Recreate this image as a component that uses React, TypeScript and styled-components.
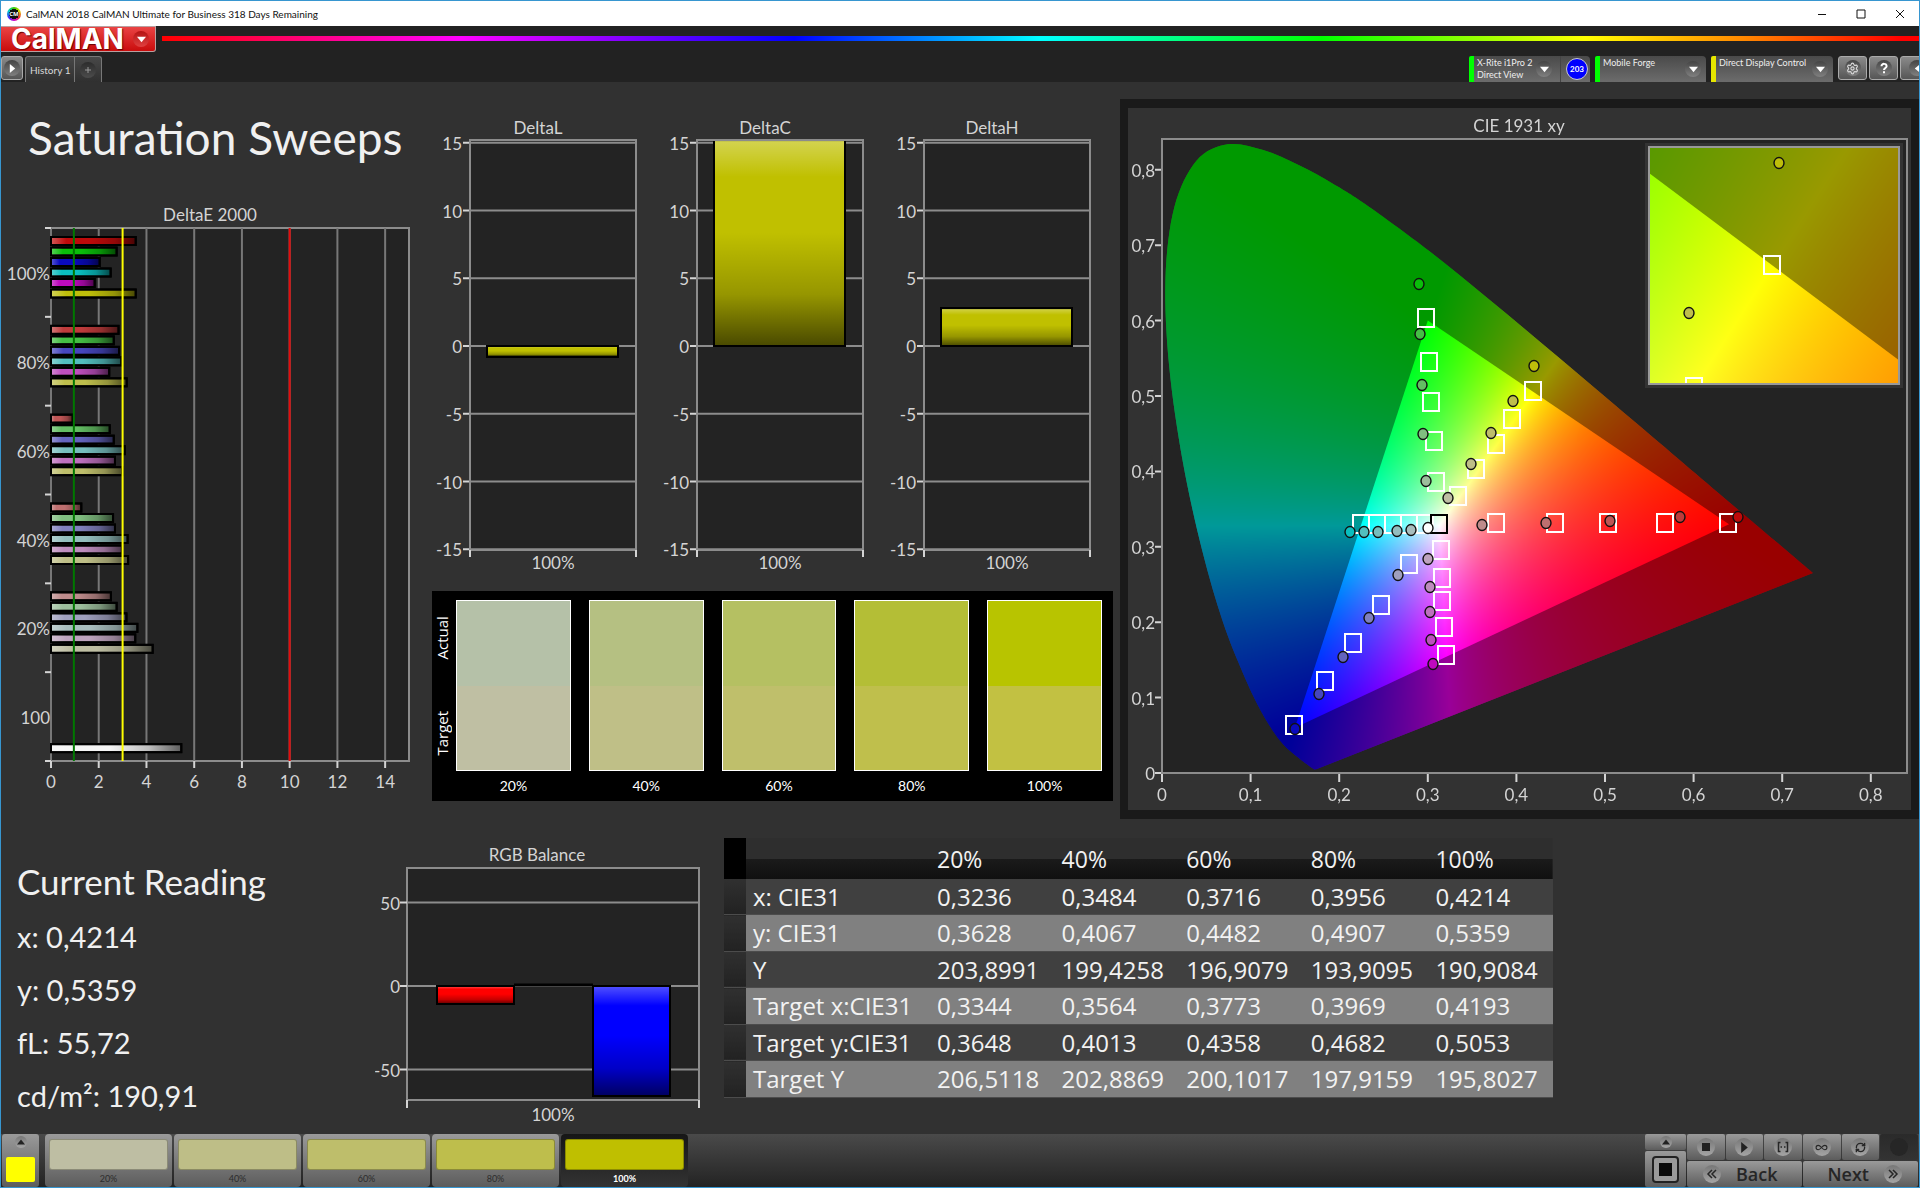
import React, { useLayoutEffect, useRef } from "react";
import styled, { createGlobalStyle, css } from "styled-components";
import { Infinity as InfinityIcon, RefreshCw, Settings } from "lucide-react";

const chartFont = `Lato, "Open Sans", sans-serif`;
const uiFont = `"Open Sans", "Noto Sans", sans-serif`;

const Global = createGlobalStyle`
  *, *::before, *::after { box-sizing: border-box; }
  body { margin: 0; background: #313131; font-family: ${chartFont}; }
  button, select { font: inherit; color: inherit; border: 0; padding: 0; margin: 0; cursor: pointer; }
`;

/* ---------- window frame ---------- */

const Window = styled.div`
  display: flex;
  flex-direction: column;
  min-height: 100vh;
  border: 1px solid #3796d0;
  background: #313131;
  color: #e6e6e6;
  overflow: hidden;
`;

const TitleBar = styled.header`
  display: flex;
  align-items: center;
  height: 25px;
  padding-left: 6px;
  background: #fff;
  color: #111;
  font-size: 10px;
`;

const AppIcon = styled.span`
  display: grid;
  place-items: center;
  width: 14px;
  height: 14px;
  margin-right: 5px;
  border-radius: 50%;
  background: radial-gradient(circle, #111 0 5px, transparent 5px),
    conic-gradient(#3c0, #dd0, #e33, #c0c, #33f, #0cc, #3c0);
  color: #fff;
  font: 700 6px/6px ${uiFont};
`;

const WindowTitle = styled.span`
  flex: 1;
`;

const CaptionButton = styled.button`
  display: grid;
  place-items: center;
  width: 39px;
  height: 24px;
  background: none;
`;

const BrandRow = styled.div`
  display: flex;
  align-items: flex-start;
  gap: 6px;
  height: 30px;
  background: #222;
`;

const Logo = styled.button`
  display: flex;
  align-items: center;
  justify-content: space-between;
  width: 155px;
  height: 26px;
  padding: 0 6px 0 10px;
  border-radius: 0 0 3px 0;
  border: solid #b9a0a0;
  border-width: 1px 1px 1px 0;
  background: linear-gradient(#ea4444, #c90c0c);
  color: #fff;
  font: 700 28px/22px Inter, sans-serif;
  text-shadow: 1px 1px 1px #600;
`;

const Rainbow = styled.div`
  flex: 1;
  height: 5px;
  margin-top: 10px;
  background: linear-gradient(90deg, #f00, #f0f 17%, #00f 36%, #0ff 50%, #0f0 66%, #ff0 81%, #f80 90%, #f00 99%);
`;

const ToolRow = styled.div`
  display: flex;
  align-items: flex-start;
  height: 26px;
  background: #222;
  font-size: 10px;
`;

const Knob = styled.span<{ $dark?: boolean; $red?: boolean }>`
  display: grid;
  place-items: center;
  flex: none;
  width: 16px;
  height: 16px;
  border-radius: 50%;
  background: ${(p) =>
    p.$red
      ? "linear-gradient(#b41414, #e04040)"
      : p.$dark
        ? "linear-gradient(#2c2c2c, #4c4c4c)"
        : "linear-gradient(#444, #808080)"};
`;

const MetalButton = styled.button<{ $width: number }>`
  display: grid;
  place-items: center;
  flex: none;
  width: ${(p) => p.$width}px;
  height: 24px;
  border: 1px solid #aaa;
  border-radius: 3px;
  background: linear-gradient(#8a8a8a, #565656);
  color: #fff;
`;

const Tab = styled.button<{ $faint?: boolean }>`
  display: grid;
  place-items: center;
  height: 26px;
  padding: 0 5px;
  border: solid #777;
  border-width: 1px 1px 0 0;
  border-radius: 0 3px 0 0;
  background: linear-gradient(#484848, #303030);
  color: ${(p) => (p.$faint ? "#999" : "#d8d8d8")};
`;

const TabStrip = styled.nav`
  display: flex;
  flex: 1;
  margin-left: 2px;
  > :first-child {
    border-left-width: 1px;
    border-radius: 3px 0 0 0;
    padding: 0 4px;
  }
`;

const Devices = styled.div`
  display: flex;
  gap: 2px;
  margin-right: -15px;
`;

const deviceBox = css<{ $accent: string; $width: number }>`
  width: ${(p) => p.$width}px;
  height: 26px;
  margin-right: 3px;
  border-left: 5px solid ${(p) => p.$accent};
  border-radius: 2px 4px 0 0;
  background: linear-gradient(#4a4a4a, #6c6c6c);
  color: #eee;
  font-size: 9px;
  line-height: 12px;
`;

const Meter = styled.div<{ $accent: string; $width: number }>`
  ${deviceBox}
  display: flex;
`;

const MeterButton = styled.button`
  display: flex;
  align-items: center;
  justify-content: space-between;
  flex: 1;
  padding: 0 8px 0 3px;
  border-right: 1px solid #444;
  background: none;
  text-align: left;
`;

const Badge = styled.span`
  display: grid;
  place-items: center;
  width: 22px;
  height: 22px;
  margin: 2px 2px 0 5px;
  border: 1px solid #ccc;
  border-radius: 50%;
  background: #00f;
  color: #fff;
  font-size: 8px;
  font-weight: 700;
`;

const DeviceSelect = styled.label<{ $accent: string; $width: number }>`
  ${deviceBox}
  display: flex;
  align-items: center;
  padding-right: 5px;
  > select {
    flex: 1;
    min-width: 0;
    height: 26px;
    padding: 0 0 12px 3px;
    appearance: none;
    background: none;
    outline: 0;
  }
`;

/* ---------- page body ---------- */

const Main = styled.main`
  flex: 1;
`;

const TopGrid = styled.div`
  display: grid;
  grid-template-columns: 424fr 695fr 799fr;
  align-items: start;
`;

const PageTitle = styled.h1`
  margin: 0;
  padding: 26px 0 32px 27px;
  color: #f0f0f0;
  font-size: 46px;
  font-weight: 400;
  line-height: 60px;
  white-space: nowrap;
`;

const Chart = styled.svg`
  display: block;
  width: 100%;
  height: auto;
  font-family: ${chartFont};
  font-size: 17px;
  fill: #d4d4d4;
`;

const MiddleColumn = styled.div`
  padding-top: 33px;
`;

const DeltaRow = styled.div`
  display: grid;
  grid-template-columns: repeat(3, 1fr);
  padding-right: 14px;
`;

const SwatchPanel = styled.section`
  display: grid;
  grid-template-columns: 24px 1fr;
  margin: 16px 7px 0;
  padding: 9px 11px 5px 0;
  background: #000;
  color: #fff;
`;

const SwatchSides = styled.div`
  display: grid;
  grid-template-rows: 1fr 1fr;
  gap: 18px;
  height: 171px;
  font: 15px/20px ${uiFont};
`;

const SideLabel = styled.span`
  display: grid;
  place-items: center;
  writing-mode: vertical-rl;
  transform: rotate(180deg);
  padding-left: 4px;
`;

const SwatchList = styled.div`
  display: grid;
  grid-template-columns: repeat(5, 1fr);
  gap: 18px;
`;

const Swatch = styled.figure`
  margin: 0;
  text-align: center;
`;

const SwatchPair = styled.div<{ $actual: string; $target: string }>`
  height: 171px;
  border: 1px solid #fff;
  background: linear-gradient(${(p) => p.$actual} 50%, ${(p) => p.$target} 50%);
`;

const SwatchCaption = styled.figcaption`
  padding-top: 4px;
  font-size: 14px;
  line-height: 21px;
`;

const CiePanel = styled.section`
  display: grid;
  margin-top: 17px;
  border: solid #1a1a1a;
  border-width: 9px 8px;
  background: #323232;
  > * {
    grid-area: 1 / 1;
  }
`;

const GamutCanvas = styled.canvas`
  display: block;
  width: 100%;
  height: auto;
`;

const BottomGrid = styled.div`
  display: grid;
  grid-template-columns: 374fr 349fr 829fr 366fr;
  align-items: start;
  padding-top: 19px;
`;

const Readings = styled.section`
  padding: 17px 0 0 16px;
  color: #f0f0f0;
  white-space: nowrap;
`;

const ReadingTitle = styled.h2`
  margin: 0 0 3px;
  font-size: 35px;
  font-weight: 400;
  line-height: 52px;
`;

const ReadingLine = styled.p`
  margin: 0;
  font-size: 29px;
  line-height: 53px;
`;

const ChartCell = styled.div`
  padding-top: 5px;
`;

const DataTable = styled.table`
  width: 100%;
  height: 260px;
  border-collapse: collapse;
  table-layout: fixed;
  color: #f2f2f2;
  font: 24px/30px ${uiFont};
`;

const Gutter = styled.td`
  width: 22px;
  padding: 0;
  background: linear-gradient(#303030, #222);
`;

const HeadRow = styled.tr`
  height: 41px;
  background: linear-gradient(#2e2e2e 50%, #1b1b1b 50%, #101010);
  > ${Gutter} {
    background: #000;
  }
`;

const BodyRow = styled.tr`
  background: #404040;
  border-bottom: 1px solid #4c4c4c;
  &:nth-child(even) {
    background: #808080;
  }
`;

const HeadCell = styled.th<{ $name?: boolean }>`
  width: ${(p) => (p.$name ? "184px" : "auto")};
  padding: 0 0 0 7px;
  font-size: 23px;
  font-weight: 400;
  text-align: left;
`;

const RowName = styled.th`
  padding: 0 0 0 7px;
  font-weight: 400;
  text-align: left;
  white-space: nowrap;
`;

const Cell = styled.td`
  padding: 0 0 0 7px;
`;

/* ---------- bottom bar ---------- */

const BottomBar = styled.footer`
  display: flex;
  height: 53px;
  padding: 0 1px;
  background: linear-gradient(#4a4a4a, #232323);
`;

const metal = "linear-gradient(#9a9a9a, #5c5c5c)";

const PickerButton = styled.button`
  display: flex;
  flex-direction: column;
  align-items: center;
  justify-content: space-between;
  width: 37px;
  padding: 2px 0 5px;
  border-radius: 3px;
  background: ${metal};
`;

const PickerColor = styled.span`
  width: 29px;
  height: 25px;
  border-radius: 2px;
  background: #ff0;
`;

const PatternList = styled.div`
  display: flex;
  flex: 1;
  gap: 2px;
  margin-left: 6px;
`;

const PatternButton = styled.button<{ $active?: boolean }>`
  display: flex;
  flex-direction: column;
  justify-content: space-between;
  width: 127px;
  padding: 5px 4px 1px;
  border-radius: 4px;
  background: ${(p) => (p.$active ? "linear-gradient(#161616, #333)" : metal)};
  color: ${(p) => (p.$active ? "#fff" : "#2c2c2c")};
  font-size: 9px;
  font-weight: ${(p) => (p.$active ? 700 : 400)};
  line-height: 14px;
  text-align: center;
`;

const PatternColor = styled.span<{ $color: string }>`
  display: block;
  width: 100%;
  height: 31px;
  border: 1px solid #0004;
  border-radius: 3px;
  background: ${(p) => p.$color};
`;

const PatternName = styled.span`
  width: 100%;
`;

const Transport = styled.div`
  display: flex;
  gap: 1px;
`;

const DisplayStack = styled.div`
  display: grid;
  grid-template-rows: 16px 1fr;
  gap: 1px;
  width: 41px;
`;

const ControlGrid = styled.div`
  display: grid;
  grid-template-columns: repeat(6, 1fr);
  grid-template-rows: 26px 1fr;
  gap: 1px;
  width: 231px;
`;

const ControlButton = styled.button<{ $wide?: boolean; $off?: boolean }>`
  display: flex;
  align-items: center;
  justify-content: center;
  gap: 15px;
  grid-column: span ${(p) => (p.$wide ? 3 : 1)};
  border-radius: 2px;
  background: ${(p) => (p.$off ? "linear-gradient(#2a2a2a, #333)" : metal)};
  color: #262626;
  font: 600 18px/22px ${uiFont};
`;

const BackButton = styled(ControlButton)`
  justify-content: flex-start;
  padding-left: 16px;
`;

const NextButton = styled(ControlButton)`
  justify-content: flex-end;
  padding-right: 16px;
`;

const ControlKnob = styled.span<{ $off?: boolean; $small?: boolean }>`
  display: grid;
  place-items: center;
  width: ${(p) => (p.$small ? 12 : 18)}px;
  height: ${(p) => (p.$small ? 12 : 18)}px;
  border-radius: 50%;
  background: ${(p) => (p.$off ? "#262626" : "linear-gradient(#777, #a5a5a5)")};
`;

/* ---------- icons ---------- */

const Caret = ({ dir = "down", color = "#fff", size = 9 }: { dir?: "down" | "up" | "left" | "right"; color?: string; size?: number }) => {
  const points = { down: "0,2 10,2 5,8", up: "0,8 10,8 5,2", left: "8,0 8,10 2,5", right: "2,0 2,10 8,5" }[dir];
  return (
    <svg width={size} height={size} viewBox="0 0 10 10" aria-hidden="true">
      <polygon points={points} fill={color} />
    </svg>
  );
};

const Line = ({ d, size = 12, width = 1 }: { d: string; size?: number; width?: number }) => (
  <svg width={size} height={size} viewBox="0 0 12 12" fill="none" stroke="currentColor" strokeWidth={width} aria-hidden="true">
    <path d={d} />
  </svg>
);

/* ---------- data ---------- */

const hues: Record<string, string[]> = {
  "100%": ["#be0a0a", "#0abe0a", "#0a0abe", "#0abebe", "#be0abe", "#bebe0a"],
  "80%": ["#be3b3b", "#45be45", "#4646be", "#52bebe", "#be4fbe", "#bebe4c"],
  "60%": ["#be5555", "#63be63", "#6464be", "#76bebe", "#be70be", "#bebe6b"],
  "40%": ["#be6f6f", "#80be80", "#8080be", "#93bebe", "#be8cbe", "#bebe87"],
  "20%": ["#be8b8b", "#9cbe9c", "#9f9fbe", "#a8bebe", "#bea3be", "#bebea3"],
};
const levels = ["20%", "40%", "60%", "80%", "100%"];

const deltaE: { name: string; values: number[] }[] = [
  { name: "100%", values: [3.55, 2.75, 2.04, 2.5, 1.83, 3.55] },
  { name: "80%", values: [2.83, 2.63, 2.85, 2.95, 2.44, 3.17] },
  { name: "60%", values: [0.91, 2.46, 2.63, 3.09, 2.68, 2.99] },
  { name: "40%", values: [1.27, 2.6, 2.68, 3.21, 2.97, 3.23] },
  { name: "20%", values: [2.51, 2.75, 3.16, 3.62, 3.53, 4.26] },
];

const swatches = [
  ["#b5c1a8", "#bfbfa3"],
  ["#b5c082", "#bfbf87"],
  ["#b5c062", "#bfbf6b"],
  ["#b4be36", "#bfbf4c"],
  ["#b8c400", "#c2c142"],
];

const tableRows: [string, string[]][] = [
  ["x: CIE31", ["0,3236", "0,3484", "0,3716", "0,3956", "0,4214"]],
  ["y: CIE31", ["0,3628", "0,4067", "0,4482", "0,4907", "0,5359"]],
  ["Y", ["203,8991", "199,4258", "196,9079", "193,9095", "190,9084"]],
  ["Target x:CIE31", ["0,3344", "0,3564", "0,3773", "0,3969", "0,4193"]],
  ["Target y:CIE31", ["0,3648", "0,4013", "0,4358", "0,4682", "0,5053"]],
  ["Target Y", ["206,5118", "202,8869", "200,1017", "197,9159", "195,8027"]],
];

/* ---------- charts ---------- */

const grid = "#8c8c8c";
const tick = "#d4d4d4";

const Shade = ({ id, across }: { id: string; across?: boolean }) => (
  <linearGradient id={id} x1="0" y1="0" x2={across ? "1" : "0"} y2={across ? "0" : "1"}>
    <stop offset="0" stopColor="#fff" stopOpacity="0.32" />
    <stop offset="0.18" stopColor="#fff" stopOpacity="0" />
    <stop offset="0.45" stopColor="#000" stopOpacity="0" />
    <stop offset="0.75" stopColor="#000" stopOpacity="0.22" />
    <stop offset="1" stopColor="#000" stopOpacity="0.62" />
  </linearGradient>
);

const Bar = ({ x, y, w, h, color, shade }: { x: number; y: number; w: number; h: number; color: string; shade: string }) => (
  <g stroke="#000" strokeWidth="2">
    <rect x={x} y={y} width={w} height={h} fill={color} />
    <rect x={x} y={y} width={w} height={h} fill={`url(#${shade})`} />
  </g>
);

function DeltaEChart() {
  const left = 50, top = 28, width = 358, height = 533;
  const unit = width / 15;
  const band = height / 6;
  const bottom = top + height;
  const marks = [0, 2, 4, 6, 8, 10, 12, 14];
  const bar = (value: number, group: number, index: number, color: string) => (
    <Bar key={`${group}-${index}`} x={left} y={top + band * group + 9 + index * 10.5} w={value * unit} h={8} color={color} shade="shade-e" />
  );
  return (
    <Chart viewBox="0 0 424 600" role="img" aria-label="DeltaE 2000">
      <defs><Shade id="shade-e" across /></defs>
      <text x="209" y="21" textAnchor="middle">DeltaE 2000</text>
      <rect x={left} y={top} width={width} height={height} fill="#232323" stroke={grid} strokeWidth="2" />
      {marks.map((m) => (
        <g key={m}>
          <line x1={left + m * unit} x2={left + m * unit} y1={top} y2={bottom} stroke="#777" strokeWidth="2" />
          <line x1={left + m * unit} x2={left + m * unit} y1={bottom} y2={bottom + 7} stroke={tick} strokeWidth="2" />
          <text x={left + m * unit} y={bottom + 27} textAnchor="middle">{m}</text>
        </g>
      ))}
      {[0, 1, 2, 3, 4, 5, 6].map((g) => (
        <line key={g} x1={left - 6} x2={left} y1={top + g * band} y2={top + g * band} stroke={tick} strokeWidth="2" />
      ))}
      {["100%", "80%", "60%", "40%", "20%", "100"].map((name, g) => (
        <text key={g} x={left - 1} y={top + band * g + 52} textAnchor="end">{name}</text>
      ))}
      {deltaE.map((row, g) => row.values.map((v, i) => bar(v, g, i, hues[row.name][i])))}
      {bar(5.46, 5, 6, "#f4f4f4")}
      <line x1={left + unit - 1} x2={left + unit - 1} y1={top} y2={bottom} stroke="#007800" strokeWidth="2" />
      <line x1={left + 3 * unit} x2={left + 3 * unit} y1={top} y2={bottom} stroke="#ff0" strokeWidth="2" />
      <line x1={left + 10 * unit} x2={left + 10 * unit} y1={top} y2={bottom} stroke="#e60a0a" strokeWidth="2" />
    </Chart>
  );
}

function DeltaChart({ name, value }: { name: string; value: number }) {
  const left = 45, right = 211, top = 25, zero = 231, bottom = 435, unit = 13.55;
  const shown = Math.min(value, 15.2);
  const id = `shade-${name}`;
  return (
    <Chart viewBox="0 0 227 460" role="img" aria-label={name}>
      <defs><Shade id={id} /></defs>
      <text x="113" y="19" textAnchor="middle">{name}</text>
      <rect x={left} y={top} width={right - left} height={bottom - top} fill="#232323" />
      {[15, 10, 5, 0, -5, -10, -15].map((m) => (
        <g key={m}>
          <line x1={left} x2={right} y1={zero - m * unit} y2={zero - m * unit} stroke={grid} strokeWidth="2" />
          <line x1={left - 7} x2={left} y1={zero - m * unit} y2={zero - m * unit} stroke={tick} strokeWidth="2" />
          <text x={left - 8} y={zero - m * unit + 7} textAnchor="end">{m}</text>
        </g>
      ))}
      <Bar x={left + 17} y={zero - Math.max(shown, 0) * unit} w={131} h={Math.abs(shown) * unit} color="#c0c000" shade={id} />
      <rect x={left} y={top} width={right - left} height={bottom - top} fill="none" stroke={grid} strokeWidth="2" />
      <path d={`M${left} ${bottom}v7M${right} ${bottom}v7`} stroke={tick} strokeWidth="2" />
      <text x="128" y="454" textAnchor="middle">100%</text>
    </Chart>
  );
}

function RgbBalanceChart() {
  const left = 32, right = 324, top = 25, zero = 143, bottom = 257, unit = 1.67;
  return (
    <Chart viewBox="0 0 349 286" role="img" aria-label="RGB Balance">
      <defs><Shade id="shade-rgb" /></defs>
      <text x="162" y="18" textAnchor="middle">RGB Balance</text>
      <rect x={left} y={top} width={right - left} height={bottom - top} fill="#232323" stroke={grid} strokeWidth="2" />
      {[50, 0, -50].map((m) => (
        <g key={m}>
          <line x1={left} x2={right} y1={zero - m * unit} y2={zero - m * unit} stroke={grid} strokeWidth="2" />
          <line x1={left - 7} x2={left} y1={zero - m * unit} y2={zero - m * unit} stroke={tick} strokeWidth="2" />
          <text x={left - 7} y={zero - m * unit + 7} textAnchor="end">{m}</text>
        </g>
      ))}
      <Bar x={62} y={zero} w={77} h={18} color="#f00" shade="shade-rgb" />
      <line x1="139" x2="218" y1={zero - 1} y2={zero - 1} stroke="#000" strokeWidth="3" />
      <Bar x={218} y={zero} w={77} h={110} color="#00f" shade="shade-rgb" />
      <path d={`M${left} ${bottom}v8M${right} ${bottom}v8`} stroke={tick} strokeWidth="2" />
      <text x="178" y="278" textAnchor="middle">100%</text>
    </Chart>
  );
}

/* CIE 1931 spectral locus, 380 to 700 nm */
const locus: [number, number][] = [
  [0.1741, 0.005], [0.1726, 0.0048], [0.1714, 0.0051], [0.1689, 0.0069], [0.1644, 0.0109], [0.1566, 0.0177],
  [0.144, 0.0297], [0.1355, 0.0399], [0.1241, 0.0578], [0.1096, 0.0868], [0.0913, 0.1327], [0.0687, 0.2007],
  [0.0454, 0.295], [0.0235, 0.4127], [0.0082, 0.5384], [0.0039, 0.6548], [0.0139, 0.7502], [0.0389, 0.812],
  [0.0743, 0.8338], [0.1142, 0.8262], [0.1547, 0.8059], [0.1929, 0.7816], [0.2296, 0.7543], [0.3016, 0.6923],
  [0.3731, 0.6245], [0.4441, 0.5547], [0.5125, 0.4866], [0.5752, 0.4242], [0.627, 0.3725], [0.6658, 0.334],
  [0.6915, 0.3083], [0.719, 0.2809], [0.7347, 0.2653],
];
const rec709: [number, number][] = [[0.64, 0.33], [0.3, 0.6], [0.15, 0.06]];

const cie = { width: 783, height: 702, left: 34, right: 779, top: 31, bottom: 665, sx: 886, sy: 754 };
const inset = { left: 521, top: 39, width: 250, height: 237, cx: 644, cy: 157, x: 0.4193, y: 0.5053, sx: 3500, sy: 3300 };

type Project = (x: number, y: number) => [number, number];
const toPlot: Project = (x, y) => [cie.left + x * cie.sx, cie.bottom - y * cie.sy];
const toInset: Project = (x, y) => [inset.cx + (x - inset.x) * inset.sx, inset.cy - (y - inset.y) * inset.sy];

function chromaColor(x: number, y: number): [number, number, number] {
  const X = x / y;
  const Z = (1 - x - y) / y;
  const r = Math.max(0, 3.2406 * X - 1.5372 - 0.4986 * Z);
  const g = Math.max(0, -0.9689 * X + 1.8758 + 0.0415 * Z);
  const b = Math.max(0, 0.0557 * X - 0.204 + 1.057 * Z);
  const top = Math.max(r, g, b, 1e-6);
  return [(255 * r) / top, (255 * g) / top, (255 * b) / top];
}

function colorField(w: number, h: number, locate: (px: number, py: number) => [number, number]) {
  const field = document.createElement("canvas");
  field.width = w;
  field.height = h;
  const ctx = field.getContext("2d")!;
  const image = ctx.createImageData(w, h);
  for (let py = 0; py < h; py++) {
    for (let px = 0; px < w; px++) {
      const [x, y] = locate(px, py);
      const [r, g, b] = chromaColor(x, Math.max(y, 0.001));
      image.data.set([r, g, b, 255], (py * w + px) * 4);
    }
  }
  ctx.putImageData(image, 0, 0);
  return field;
}

function locusPath(project: Project) {
  const pts = locus.map(([x, y]) => project(x, y));
  const path = new Path2D();
  path.moveTo(...pts[0]);
  for (let i = 0; i < pts.length - 1; i++) {
    const a = pts[Math.max(i - 1, 0)], b = pts[i], c = pts[i + 1], d = pts[Math.min(i + 2, pts.length - 1)];
    path.bezierCurveTo(b[0] + (c[0] - a[0]) / 6, b[1] + (c[1] - a[1]) / 6, c[0] - (d[0] - b[0]) / 6, c[1] - (d[1] - b[1]) / 6, c[0], c[1]);
  }
  path.closePath();
  return path;
}

function trianglePath(project: Project) {
  const path = new Path2D();
  rec709.forEach(([x, y]) => path.lineTo(...project(x, y)));
  path.closePath();
  return path;
}

function paintGamut(ctx: CanvasRenderingContext2D, field: HTMLCanvasElement, x: number, y: number, project: Project) {
  const outer = locusPath(project);
  ctx.save();
  ctx.clip(outer);
  ctx.drawImage(field, x, y);
  ctx.fillStyle = "rgba(0, 0, 0, 0.4)";
  ctx.fillRect(x, y, field.width, field.height);
  ctx.restore();
  ctx.save();
  ctx.clip(trianglePath(project));
  ctx.drawImage(field, x, y);
  ctx.restore();
}

/* Marker centres on the CIE chart: [targetX, targetY, actualX, actualY], 20% to 100% */
const sweeps: { hue: number; points: [number, number, number, number][] }[] = [
  { hue: 1, points: [[308, 374, 298, 373], [306, 333, 295, 326], [303, 294, 294, 277], [301, 254, 292, 226], [298, 210, 291, 176]] },
  { hue: 5, points: [[330, 388, 320, 390], [348, 361, 343, 356], [368, 336, 363, 325], [384, 311, 385, 293], [405, 283, 406, 258]] },
  { hue: 3, points: [[297, 416, 283, 422], [281, 416, 269, 423], [265, 416, 250, 424], [249, 416, 236, 424], [233, 416, 222, 424]] },
  { hue: 0, points: [[368, 415, 354, 417], [427, 415, 418, 415], [480, 415, 482, 413], [537, 415, 552, 409], [600, 415, 610, 409]] },
  { hue: 4, points: [[313, 442, 300, 451], [314, 470, 302, 479], [314, 493, 302, 504], [316, 519, 303, 532], [318, 547, 305, 556]] },
  { hue: 2, points: [[281, 456, 270, 467], [253, 497, 241, 510], [225, 535, 215, 549], [197, 573, 191, 586], [166, 617, 167, 621]] },
];

const Target = ({ x, y, color = "#fff" }: { x: number; y: number; color?: string }) => (
  <rect x={x - 8} y={y - 9} width="16" height="18" fill="none" stroke={color} strokeWidth="2" />
);
const Actual = ({ x, y, color }: { x: number; y: number; color: string }) => (
  <ellipse cx={x} cy={y} rx="5" ry="5.5" fill={color} stroke="#111" strokeWidth="1.4" />
);

function CieChart() {
  const canvas = useRef<HTMLCanvasElement>(null);
  useLayoutEffect(() => {
    const ctx = canvas.current!.getContext("2d")!;
    ctx.clearRect(0, 0, cie.width, cie.height);
    ctx.fillStyle = "#232323";
    ctx.fillRect(cie.left, cie.top, cie.right - cie.left, cie.bottom - cie.top);
    const field = colorField(cie.right - cie.left, cie.bottom - cie.top, (px, py) => [px / cie.sx, (cie.bottom - cie.top - py) / cie.sy]);
    paintGamut(ctx, field, cie.left, cie.top, toPlot);
    ctx.fillStyle = "#333";
    ctx.fillRect(inset.left - 4, inset.top - 4, inset.width + 8, inset.height + 8);
    const detail = colorField(inset.width, inset.height, (px, py) => [
      inset.x + (px + inset.left - inset.cx) / inset.sx,
      inset.y - (py + inset.top - inset.cy) / inset.sy,
    ]);
    ctx.save();
    ctx.beginPath();
    ctx.rect(inset.left, inset.top, inset.width, inset.height);
    ctx.clip();
    paintGamut(ctx, detail, inset.left, inset.top, toInset);
    ctx.restore();
  }, []);

  const steps = [0, 1, 2, 3, 4, 5, 6, 7, 8];
  const label = (n: number) => (n ? `0,${n}` : "0");
  return (
    <CiePanel>
      <GamutCanvas ref={canvas} width={cie.width} height={cie.height} />
      <Chart viewBox={`0 0 ${cie.width} ${cie.height}`} role="img" aria-label="CIE 1931 xy">
        <defs>
          <clipPath id="inset-clip"><rect x={inset.left} y={inset.top} width={inset.width} height={inset.height} /></clipPath>
        </defs>
        <text x="391" y="24" textAnchor="middle">CIE 1931 xy</text>
        <rect x={cie.left} y={cie.top} width={cie.right - cie.left} height={cie.bottom - cie.top} fill="none" stroke={grid} strokeWidth="2" />
        {steps.map((n) => {
          const [x, y] = toPlot(n / 10, n / 10);
          return (
            <g key={n} stroke={tick} strokeWidth="2">
              <path d={`M${x} ${cie.bottom + 1}v8M${cie.left - 7} ${y}h6`} />
              <g stroke="none">
                <text x={x} y={cie.bottom + 28} textAnchor="middle">{label(n)}</text>
                <text x={cie.left - 7} y={y + 7} textAnchor="end">{label(n)}</text>
              </g>
            </g>
          );
        })}
        {sweeps.map((s) => s.points.map(([tx, ty], i) => <Target key={`${s.hue}${i}`} x={tx} y={ty} />))}
        <Target x={311} y={416} color="#000" />
        {sweeps.map((s) =>
          s.points.map(([, , ax, ay], i) => <Actual key={`${s.hue}${i}`} x={ax} y={ay} color={hues[levels[i]][s.hue]} />),
        )}
        <Actual x={300} y={420} color="#fff" />
        <g clipPath="url(#inset-clip)">
          <Target x={644} y={157} />
          <Target x={566} y={279} />
          <Actual x={651} y={55} color="#bebe0a" />
          <Actual x={561} y={205} color="#bebe4c" />
        </g>
        <rect x={inset.left} y={inset.top} width={inset.width} height={inset.height} fill="none" stroke="#999" strokeWidth="2" />
      </Chart>
    </CiePanel>
  );
}

/* ---------- page ---------- */

export default function App() {
  return (
    <Window>
      <Global />
      <TitleBar>
        <AppIcon aria-hidden="true">CM</AppIcon>
        <WindowTitle>CalMAN 2018 CalMAN Ultimate for Business 318 Days Remaining</WindowTitle>
        <CaptionButton aria-label="Minimize"><Line d="M2 6.5h8" /></CaptionButton>
        <CaptionButton aria-label="Maximize"><Line d="M2 2h8v8h-8z" /></CaptionButton>
        <CaptionButton aria-label="Close"><Line d="M2 2l8 8M10 2l-8 8" /></CaptionButton>
      </TitleBar>
      <BrandRow>
        <Logo>CalMAN<Knob $red><Caret /></Knob></Logo>
        <Rainbow />
      </BrandRow>
      <ToolRow>
        <MetalButton $width={22} aria-label="Open panel"><Knob><Caret dir="right" /></Knob></MetalButton>
        <TabStrip>
          <Tab>History 1</Tab>
          <Tab $faint aria-label="Add tab"><Knob $dark><Line d="M6 3v6M3 6h6" /></Knob></Tab>
        </TabStrip>
        <Devices>
          <Meter $accent="#0f0" $width={121}>
            <MeterButton><span>X-Rite i1Pro 2<br />Direct View</span><Knob><Caret /></Knob></MeterButton>
            <Badge>203</Badge>
          </Meter>
          <DeviceSelect $accent="#0f0" $width={111}>
            <select aria-label="Source"><option>Mobile Forge</option></select>
            <Knob><Caret /></Knob>
          </DeviceSelect>
          <DeviceSelect $accent="#e6e600" $width={122}>
            <select aria-label="Display"><option>Direct Display Control</option></select>
            <Knob><Caret /></Knob>
          </DeviceSelect>
          <MetalButton $width={29} aria-label="Settings"><Knob><Settings size={13} color="#ddd" /></Knob></MetalButton>
          <MetalButton $width={29} aria-label="Help"><Knob><Line d="M3.500 4.200C3.500 1 8.600 1.200 8.600 4.200C8.600 6 6 6 6 8M6 9.300v2" width={2} /></Knob></MetalButton>
          <MetalButton $width={34} aria-label="Collapse"><Knob><Caret dir="left" /></Knob></MetalButton>
        </Devices>
      </ToolRow>

      <Main>
        <TopGrid>
          <div>
            <PageTitle>Saturation Sweeps</PageTitle>
            <DeltaEChart />
          </div>
          <MiddleColumn>
            <DeltaRow>
              <DeltaChart name="DeltaL" value={-0.8} />
              <DeltaChart name="DeltaC" value={16} />
              <DeltaChart name="DeltaH" value={2.8} />
            </DeltaRow>
            <SwatchPanel>
              <SwatchSides><SideLabel>Actual</SideLabel><SideLabel>Target</SideLabel></SwatchSides>
              <SwatchList>
                {levels.map((level, i) => (
                  <Swatch key={level}>
                    <SwatchPair $actual={swatches[i][0]} $target={swatches[i][1]} />
                    <SwatchCaption>{level}</SwatchCaption>
                  </Swatch>
                ))}
              </SwatchList>
            </SwatchPanel>
          </MiddleColumn>
          <CieChart />
        </TopGrid>

        <BottomGrid>
          <Readings>
            <ReadingTitle>Current Reading</ReadingTitle>
            <ReadingLine>x: 0,4214</ReadingLine>
            <ReadingLine>y: 0,5359</ReadingLine>
            <ReadingLine>fL: 55,72</ReadingLine>
            <ReadingLine>cd/m²: 190,91</ReadingLine>
          </Readings>
          <ChartCell><RgbBalanceChart /></ChartCell>
          <DataTable>
            <thead>
              <HeadRow>
                <Gutter />
                <HeadCell $name aria-label="Measure" />
                {levels.map((l) => <HeadCell key={l} scope="col">{l}</HeadCell>)}
              </HeadRow>
            </thead>
            <tbody>
              {tableRows.map(([name, values]) => (
                <BodyRow key={name}>
                  <Gutter />
                  <RowName scope="row">{name}</RowName>
                  {values.map((v, i) => <Cell key={i}>{v}</Cell>)}
                </BodyRow>
              ))}
            </tbody>
          </DataTable>
        </BottomGrid>
      </Main>

      <BottomBar>
        <PickerButton aria-label="Pattern colour">
          <ControlKnob $small><Caret dir="up" color="#222" size={8} /></ControlKnob>
          <PickerColor />
        </PickerButton>
        <PatternList>
          {levels.map((level) => (
            <PatternButton key={level} $active={level === "100%"}>
              <PatternColor $color={level === "100%" ? "#bfbf00" : hues[level][5]} />
              <PatternName>{level}</PatternName>
            </PatternButton>
          ))}
        </PatternList>
        <Transport>
          <DisplayStack>
            <ControlButton aria-label="Expand"><ControlKnob $small><Caret dir="up" color="#222" size={8} /></ControlKnob></ControlButton>
            <ControlButton aria-label="Pattern window">
              <svg width="27" height="27" viewBox="0 0 27 27" aria-hidden="true">
                <rect x="1" y="1" width="25" height="25" rx="3" fill="#9a9a9a" stroke="#222" strokeWidth="2" />
                <rect x="7" y="7" width="13" height="13" fill="#0a0a0a" />
              </svg>
            </ControlButton>
          </DisplayStack>
          <ControlGrid>
            <ControlButton aria-label="Stop">
              <ControlKnob><svg width="8" height="8" aria-hidden="true"><rect width="8" height="8" fill="#222" /></svg></ControlKnob>
            </ControlButton>
            <ControlButton aria-label="Play"><ControlKnob><Caret dir="right" color="#222" size={11} /></ControlKnob></ControlButton>
            <ControlButton aria-label="Read series"><ControlKnob><Line d="M3.500 1.500H1.500v9h2M8.500 1.500h2v9h-2M3.500 6h1.500M7 6h1.500" width={1.500} /></ControlKnob></ControlButton>
            <ControlButton aria-label="Read continuously"><ControlKnob><InfinityIcon size={13} /></ControlKnob></ControlButton>
            <ControlButton aria-label="Refresh"><ControlKnob><RefreshCw size={11} strokeWidth={3} /></ControlKnob></ControlButton>
            <ControlButton $off disabled aria-label="Inactive"><ControlKnob $off /></ControlButton>
            <BackButton $wide><ControlKnob><Line d="M6 2L2 6l4 4M10 2L6 6l4 4" width={1.500} /></ControlKnob>Back</BackButton>
            <NextButton $wide>Next<ControlKnob><Line d="M2 2l4 4-4 4M6 2l4 4-4 4" width={1.500} /></ControlKnob></NextButton>
          </ControlGrid>
        </Transport>
      </BottomBar>
    </Window>
  );
}
